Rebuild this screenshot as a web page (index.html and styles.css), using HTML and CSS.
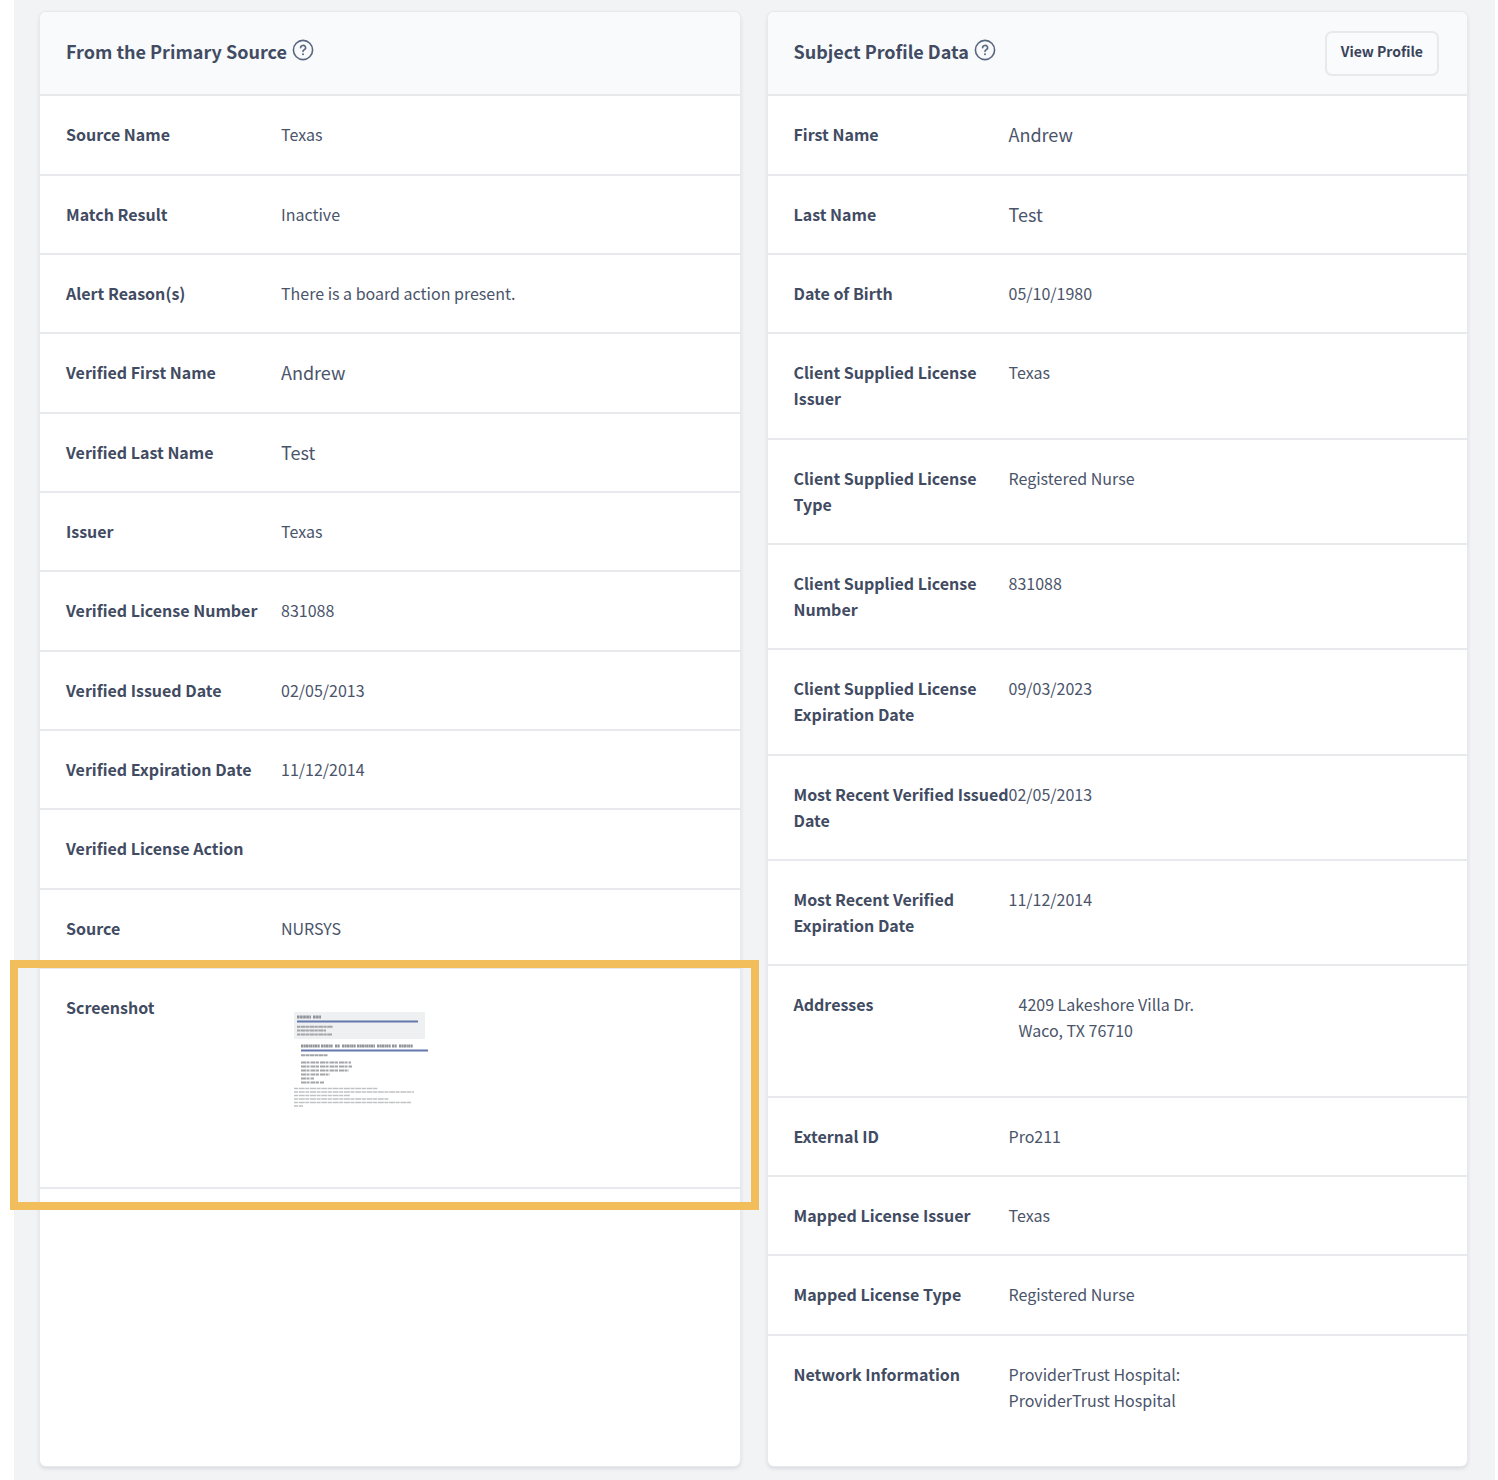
FILE: index.html
```html
<!DOCTYPE html>
<html lang="en">

<head>
    <meta charset="UTF-8">
    <meta name="viewport" content="width=device-width, initial-scale=1.0">
    <title>License Verification</title>
    <link rel="stylesheet" href="styles.css">
</head>

<body>
    <main class="page">
        <section class="card">
            <header class="card-header">
                <h2>From the Primary Source</h2>
                <button class="help" type="button" aria-label="Help">
                    <svg viewBox="0 0 22 22" width="22" height="22">
                        <circle cx="11" cy="11" r="9.6" />
                        <path d="M8.6 8.7a2.5 2.3 0 1 1 3.6 2.1c-.9.4-1.2.8-1.2 1.7" />
                        <circle class="dot" cx="11" cy="15.2" r="1" />
                    </svg>
                </button>
            </header>
            <dl class="rows">
                <div class="row"><dt>Source Name</dt><dd>Texas</dd></div>
                <div class="row"><dt>Match Result</dt><dd>Inactive</dd></div>
                <div class="row"><dt>Alert Reason(s)</dt><dd>There is a board action present.</dd></div>
                <div class="row"><dt>Verified First Name</dt><dd class="name">Andrew</dd></div>
                <div class="row"><dt>Verified Last Name</dt><dd class="name">Test</dd></div>
                <div class="row"><dt>Issuer</dt><dd>Texas</dd></div>
                <div class="row"><dt>Verified License Number</dt><dd>831088</dd></div>
                <div class="row"><dt>Verified Issued Date</dt><dd>02/05/2013</dd></div>
                <div class="row"><dt>Verified Expiration Date</dt><dd>11/12/2014</dd></div>
                <div class="row"><dt>Verified License Action</dt><dd></dd></div>
                <div class="row"><dt>Source</dt><dd>NURSYS</dd></div>
                <div class="row highlighted">
                    <dt>Screenshot</dt>
                    <dd class="shot">
                        <svg class="thumb" viewBox="0 0 136 96" width="136" height="96" role="img" aria-label="Source screenshot">
                            <rect class="thumb-head" width="131" height="27" />
                            <g class="thumb-bold">
                                <path d="M3 5h14M19 5h8" stroke-dasharray="2.6 .5" />
                                <path d="M7 34h19M27 34h12M41 34h5M48 34h14M63 34h18M83 34h14M98 34h5M105 34h14" stroke-dasharray="2.4 .4 1.5 .3" />
                            </g>
                            <path class="thumb-rule" d="M3 9.5h121M7 38.5h127" />
                            <g class="thumb-mid">
                                <path d="M3 14.7h36M3 18.6h29M3 22.5h35" stroke-dasharray="3 .5 5 .4" />
                                <path d="M7 43.3h27" stroke-dasharray="4 .5" />
                                <path d="M7 50.5h50M7 54.4h51M7 58.4h48M7 62.4h29M7 66.4h13M7 70.5h23" stroke-dasharray="5 .5 3 1" />
                            </g>
                            <g class="thumb-fine">
                                <path d="M0 76.5h84M0 80h120M0 83.5h56M0 87h95M0 90.5h117M0 94h9" stroke-dasharray="4 .7 6 .6" />
                            </g>
                        </svg>
                    </dd>
                </div>
            </dl>
        </section>

        <section class="card">
            <header class="card-header">
                <h2>Subject Profile Data</h2>
                <button class="help" type="button" aria-label="Help">
                    <svg viewBox="0 0 22 22" width="22" height="22">
                        <circle cx="11" cy="11" r="9.6" />
                        <path d="M8.6 8.7a2.5 2.3 0 1 1 3.6 2.1c-.9.4-1.2.8-1.2 1.7" />
                        <circle class="dot" cx="11" cy="15.2" r="1" />
                    </svg>
                </button>
                <button class="view-profile" type="button">View Profile</button>
            </header>
            <dl class="rows">
                <div class="row"><dt>First Name</dt><dd class="name">Andrew</dd></div>
                <div class="row"><dt>Last Name</dt><dd class="name">Test</dd></div>
                <div class="row"><dt>Date of Birth</dt><dd>05/10/1980</dd></div>
                <div class="row"><dt>Client Supplied License Issuer</dt><dd>Texas</dd></div>
                <div class="row"><dt>Client Supplied License Type</dt><dd>Registered Nurse</dd></div>
                <div class="row"><dt>Client Supplied License Number</dt><dd>831088</dd></div>
                <div class="row"><dt>Client Supplied License Expiration Date</dt><dd>09/03/2023</dd></div>
                <div class="row"><dt>Most Recent Verified Issued Date</dt><dd>02/05/2013</dd></div>
                <div class="row"><dt>Most Recent Verified Expiration Date</dt><dd>11/12/2014</dd></div>
                <div class="row tall"><dt>Addresses</dt><dd class="address">4209 Lakeshore Villa Dr.<br>Waco, TX 76710</dd></div>
                <div class="row"><dt>External ID</dt><dd>Pro211</dd></div>
                <div class="row"><dt>Mapped License Issuer</dt><dd>Texas</dd></div>
                <div class="row"><dt>Mapped License Type</dt><dd>Registered Nurse</dd></div>
                <div class="row tall"><dt>Network Information</dt><dd>ProviderTrust Hospital:<br>ProviderTrust Hospital</dd></div>
            </dl>
        </section>
    </main>
</body>

</html>
```
FILE: styles.css
```css
* {
    box-sizing: border-box;
    margin: 0;
}

body {
    background-color: #fff;
    color: #4a546a;
    font-family: "Noto Sans CJK SC", "Open Sans", sans-serif;
    font-size: 16px;
    line-height: 26px;
}

.page {
    display: grid;
    grid-template-columns: 1fr 1fr;
    gap: 28px;
    min-height: 100vh;
    margin: 0 3px 0 14px;
    padding: 12px 28px 14px 26px;
    background-color: #f2f3f5;
}

.card {
    background-color: #fff;
    border-radius: 6px;
    box-shadow: 0 0 0 1px #e7e9ec, 0 2px 4px rgba(30, 40, 60, 0.16);
}

.card-header {
    display: flex;
    align-items: center;
    height: 84px;
    padding: 0 28px 0 26px;
    background-color: #f9fafc;
    border-bottom: 2px solid #e7e9ed;
    border-radius: 6px 6px 0 0;
}

h2 {
    padding-bottom: 4px;
    color: #414b62;
    font-size: 18px;
    font-weight: 600;
}

.help {
    display: flex;
    margin-left: 5px;
    padding: 0 0 6px;
    border: none;
    background: none;
}

.help svg {
    fill: none;
    stroke: #5a6780;
    stroke-width: 1.6;
    stroke-linecap: round;
}

.help .dot {
    fill: #5a6780;
    stroke: none;
}

.view-profile {
    height: 45px;
    margin-left: auto;
    padding: 0 14px 4px;
    border: 2px solid #e7e9ed;
    border-radius: 7px;
    background-color: #fafbfd;
    color: #39435a;
    font-family: inherit;
    font-size: 14px;
    font-weight: 600;
}

.row {
    position: relative;
    display: grid;
    grid-template-columns: 215px 1fr;
    padding: 25px 26px 26px;
    border-bottom: 2px solid #e7e9ed;
}

.row:nth-child(3n + 1) {
    padding-bottom: 27px;
}

.row:last-child:not(.highlighted) {
    border-bottom: none;
}

/* long labels may run right up to the value */
dt {
    margin-right: -4px;
    color: #414b62;
    font-weight: 600;
}

.name {
    font-size: 18px;
}

.tall dd {
    min-height: 78px;
}

.address {
    padding-left: 10px;
}

.shot {
    height: 167px;
    padding: 18px 13px;
}

.thumb {
    display: block;
    fill: none;
}

.thumb-head {
    fill: #eff0f2;
}

.thumb-rule {
    stroke: #6478ad;
    stroke-width: 2;
}

.thumb-bold {
    stroke: #909399;
    stroke-width: 3;
}

.thumb-mid {
    stroke: #a3a5a9;
    stroke-width: 2;
}

.thumb-fine {
    stroke: #c0c1c4;
    stroke-width: 1.5;
}

/* callout frame around the screenshot row */
.highlighted::after {
    content: "";
    position: absolute;
    inset: -9px -19px -23px -30px;
    border: 8px solid #f2be5c;
}
```
